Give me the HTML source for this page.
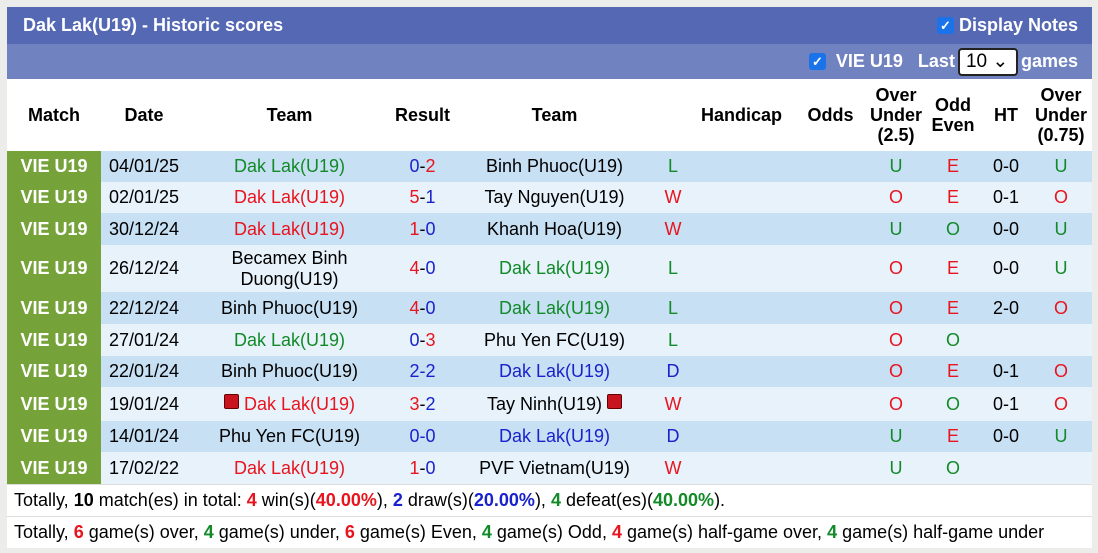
<!DOCTYPE html>
<html><head><style>
body{margin:0;width:1098px;height:553px;background:#ececea;font-family:"Liberation Sans",Arial,sans-serif;overflow:hidden;position:relative}
.wrap{position:absolute;left:7px;top:7px;width:1085px;height:541px;background:#fff}
.t1{height:37px;background:#5568b3;color:#fff;font-weight:bold;font-size:18px;line-height:36px;padding-left:16px;position:relative}
.t2{height:35px;background:#7182c1;color:#fff;font-weight:bold;font-size:18px;position:relative}
.cb{display:inline-block;width:17px;height:17px;background:#1a73e8;border-radius:3px;color:#fff;font-size:13px;line-height:17px;text-align:center;vertical-align:1px}
table{border-collapse:collapse;table-layout:fixed;width:1085px;font-size:18px}
td{text-align:center;padding:0;line-height:21px}
th{font-size:18px;font-weight:bold;line-height:20px;height:72px;padding:0}
tr.a td{background:#c8e0f4}
tr.b td{background:#e7f2fb}
td.m{background:#75a33a!important;color:#fff;font-weight:bold}
.g{color:#128a28}.r{color:#e8141e}.bl{color:#1a22cc}
.f{height:31px;line-height:31px;font-size:18px;padding-left:7px;border-top:1px solid #ddd}
b.r,b.g,b.bl{font-weight:bold}
.ic{display:inline-block;width:13px;height:13px;background:#c8141e;border:1px solid #600;border-radius:2px;vertical-align:1px}
.row2{position:absolute;right:14px;top:0;height:35px;display:flex;align-items:center}
.sel{display:inline-block;background:#fff;color:#000;font-weight:normal;border:2px solid #222;border-radius:4px;width:60px;height:28px;line-height:24px;text-align:left;padding-left:6px;box-sizing:border-box;font-size:19px;margin:0 3px}
</style></head><body>
<div class="wrap">
<div class="t1">Dak Lak(U19) - Historic scores<span style="position:absolute;right:14px;top:0"><span class="cb">✓</span> Display Notes</span></div>
<div class="t2"><div class="row2"><span class="cb" style="vertical-align:0">✓</span>&nbsp; VIE U19 &nbsp;&nbsp;Last<span class="sel">10 ⌄</span>games</div></div>
<table>
<colgroup><col style="width:94px"><col style="width:86px"><col style="width:205px"><col style="width:61px"><col style="width:203px"><col style="width:34px"><col style="width:103px"><col style="width:75px"><col style="width:56px"><col style="width:58px"><col style="width:48px"><col style="width:62px"></colgroup>
<tr><th>Match</th><th>Date</th><th>Team</th><th>Result</th><th>Team</th><th></th><th>Handicap</th><th>Odds</th><th>Over<br>Under<br>(2.5)</th><th>Odd<br>Even</th><th>HT</th><th>Over<br>Under<br>(0.75)</th></tr>
<tr class="a" style="height:31px"><td class="m">VIE U19</td><td>04/01/25</td><td class="g">Dak Lak(U19)</td><td><span class="bl">0</span>-<span class="r">2</span></td><td>Binh Phuoc(U19)</td><td class="g">L</td><td></td><td></td><td class="g">U</td><td class="r">E</td><td>0-0</td><td class="g">U</td></tr>
<tr class="b" style="height:31px"><td class="m">VIE U19</td><td>02/01/25</td><td class="r">Dak Lak(U19)</td><td><span class="r">5</span>-<span class="bl">1</span></td><td>Tay Nguyen(U19)</td><td class="r">W</td><td></td><td></td><td class="r">O</td><td class="r">E</td><td>0-1</td><td class="r">O</td></tr>
<tr class="a" style="height:32px"><td class="m">VIE U19</td><td>30/12/24</td><td class="r">Dak Lak(U19)</td><td><span class="r">1</span>-<span class="bl">0</span></td><td>Khanh Hoa(U19)</td><td class="r">W</td><td></td><td></td><td class="g">U</td><td class="g">O</td><td>0-0</td><td class="g">U</td></tr>
<tr class="b" style="height:47px"><td class="m">VIE U19</td><td>26/12/24</td><td>Becamex Binh<br>Duong(U19)</td><td><span class="r">4</span>-<span class="bl">0</span></td><td class="g">Dak Lak(U19)</td><td class="g">L</td><td></td><td></td><td class="r">O</td><td class="r">E</td><td>0-0</td><td class="g">U</td></tr>
<tr class="a" style="height:32px"><td class="m">VIE U19</td><td>22/12/24</td><td>Binh Phuoc(U19)</td><td><span class="r">4</span>-<span class="bl">0</span></td><td class="g">Dak Lak(U19)</td><td class="g">L</td><td></td><td></td><td class="r">O</td><td class="r">E</td><td>2-0</td><td class="r">O</td></tr>
<tr class="b" style="height:32px"><td class="m">VIE U19</td><td>27/01/24</td><td class="g">Dak Lak(U19)</td><td><span class="bl">0</span>-<span class="r">3</span></td><td>Phu Yen FC(U19)</td><td class="g">L</td><td></td><td></td><td class="r">O</td><td class="g">O</td><td></td><td></td></tr>
<tr class="a" style="height:31px"><td class="m">VIE U19</td><td>22/01/24</td><td>Binh Phuoc(U19)</td><td class="bl">2-2</td><td class="bl">Dak Lak(U19)</td><td class="bl">D</td><td></td><td></td><td class="r">O</td><td class="r">E</td><td>0-1</td><td class="r">O</td></tr>
<tr class="b" style="height:34px"><td class="m">VIE U19</td><td>19/01/24</td><td class="r"><span class="ic"></span> Dak Lak(U19)</td><td><span class="r">3</span>-<span class="bl">2</span></td><td>Tay Ninh(U19) <span class="ic"></span></td><td class="r">W</td><td></td><td></td><td class="r">O</td><td class="g">O</td><td>0-1</td><td class="r">O</td></tr>
<tr class="a" style="height:31px"><td class="m">VIE U19</td><td>14/01/24</td><td>Phu Yen FC(U19)</td><td class="bl">0-0</td><td class="bl">Dak Lak(U19)</td><td class="bl">D</td><td></td><td></td><td class="g">U</td><td class="r">E</td><td>0-0</td><td class="g">U</td></tr>
<tr class="b" style="height:32px"><td class="m">VIE U19</td><td>17/02/22</td><td class="r">Dak Lak(U19)</td><td><span class="r">1</span>-<span class="bl">0</span></td><td>PVF Vietnam(U19)</td><td class="r">W</td><td></td><td></td><td class="g">U</td><td class="g">O</td><td></td><td></td></tr>
</table>
<div class="f">Totally, <b>10</b> match(es) in total: <b class="r">4</b> win(s)(<b class="r">40.00%</b>), <b class="bl">2</b> draw(s)(<b class="bl">20.00%</b>), <b class="g">4</b> defeat(es)(<b class="g">40.00%</b>).</div>
<div class="f">Totally, <b class="r">6</b> game(s) over, <b class="g">4</b> game(s) under, <b class="r">6</b> game(s) Even, <b class="g">4</b> game(s) Odd, <b class="r">4</b> game(s) half-game over, <b class="g">4</b> game(s) half-game under</div>
</div>
</body></html>
